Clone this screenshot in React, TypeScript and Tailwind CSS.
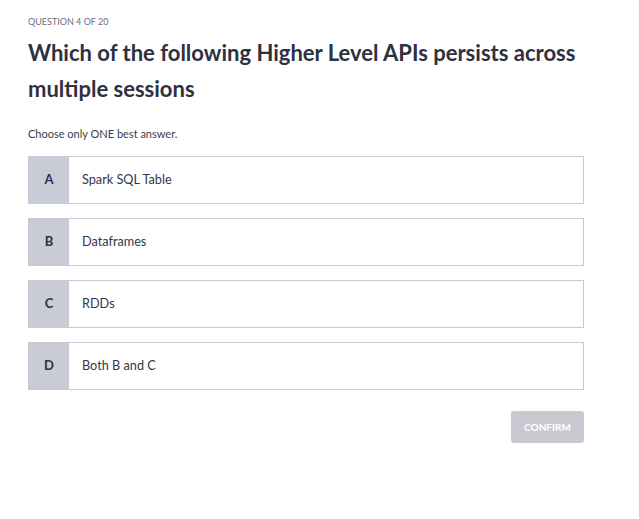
const options = [
  { key: "A", text: "Spark SQL Table" },
  { key: "B", text: "Dataframes" },
  { key: "C", text: "RDDs" },
  { key: "D", text: "Both B and C" },
];

export default function App() {
  return (
    <div
      className="min-h-[519px] w-[639px] bg-white px-[28px] pt-[16px] text-[#2d3142]"
      style={{ fontFamily: "Lato, 'Open Sans', sans-serif" }}
    >
      <div className="w-[556px]">
        <p className="text-[9px] leading-[12px] uppercase text-[#6b6e7a]">Question 4 of 20</p>
        <h1 className="mt-[7px] text-[22px] font-bold leading-[36px] text-[#2e3140]">
          Which of the following Higher Level APIs persists across multiple sessions
        </h1>
        <p className="mt-[20px] text-[11px] leading-[14px] text-[#3a3d4a]">Choose only ONE best answer.</p>

        <div className="mt-[15px] flex flex-col gap-[14px]">
          {options.map((o) => (
            <button
              key={o.key}
              type="button"
              className="flex h-[48px] w-full border border-[#c8c9d4] bg-white text-left"
            >
              <span className="flex w-[40px] shrink-0 items-center justify-center bg-[#c9ccd6] text-[13px] font-bold text-[#2e3140]">
                {o.key}
              </span>
              <span className="flex items-center pl-[13px] text-[12.7px] text-[#33364a]">{o.text}</span>
            </button>
          ))}
        </div>

        <div className="mt-[21px] flex justify-end">
          <button
            type="button"
            className="h-[32px] w-[73px] rounded-[3px] bg-[#c8c9d0] text-[10px] font-bold uppercase text-white"
          >
            Confirm
          </button>
        </div>
      </div>
    </div>
  );
}
